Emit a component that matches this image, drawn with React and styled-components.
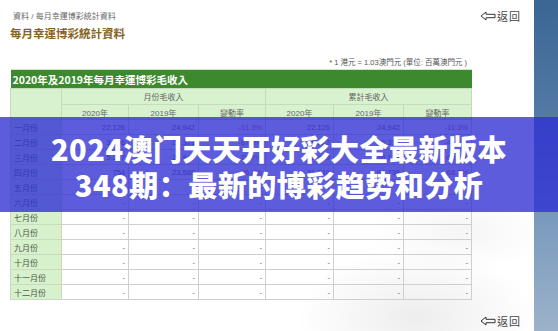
import React from 'react'
import styled, { createGlobalStyle } from 'styled-components'

const GlobalStyle = createGlobalStyle`
  html, body {
    margin: 0;
    padding: 0;
    background: #fff;
  }
  body {
    font-family: "Liberation Sans", "Noto Sans CJK TC", sans-serif;
  }
`

const Page = styled.div`
  position: relative;
  width: 558px;
  height: 331px;
  overflow: hidden;
  display: flex;
`

const Main = styled.div`
  flex: 1;
  display: flex;
  flex-direction: column;
  padding: 0 13px 3px 10px;
  background: radial-gradient(ellipse 120px 70px at 78% 96%, rgba(0, 0, 0, 0.07), transparent 100%),
    radial-gradient(ellipse 90px 40px at 86% 70%, rgba(0, 0, 0, 0.04), transparent 100%);
`

const SideStrip = styled.div`
  width: 24px;
  background: linear-gradient(180deg, #3a6594 0%, #547aa6 35%, #7e9dbf 70%, #9cb2ca 100%);
`

const TopBar = styled.div`
  display: flex;
  justify-content: space-between;
  align-items: center;
  height: 20px;
  margin-top: 5px;
`

const Crumb = styled.div`
  padding-left: 3px;
  font-size: 8px;
  color: #6a6a6a;
`

const BackLink = styled.a`
  display: flex;
  align-items: center;
  gap: 1px;
  font-size: 11px;
  color: #444;
  letter-spacing: 1px;
  text-decoration: none;
  align-self: ${({ bottom }) => (bottom ? 'flex-end' : 'auto')};
  margin-top: ${({ bottom }) => (bottom ? 'auto' : '2px')};
  height: 14px;
`

const Title = styled.h1`
  margin: 1px 0 0;
  height: 16px;
  line-height: 16px;
  font-size: 11.5px;
  font-weight: bold;
  color: #86651f;
`

const TableBlock = styled.div`
  width: 461px;
  margin-top: 15px;
`

const Note = styled.div`
  height: 12px;
  line-height: 12px;
  text-align: right;
  padding-right: 4px;
  font-size: 7.5px;
  color: #555;
`

const Table = styled.table`
  width: 461px;
  border-collapse: collapse;
  table-layout: fixed;
  border-top: 1px solid #c8ecbc;
`

const Caption = styled.th`
  height: 18px;
  padding: 0 0 0 2px;
  background: #3c8a2d;
  color: #fff;
  font-size: 10.5px;
  font-weight: bold;
  text-align: left;
  font-family: "Noto Sans CJK TC", sans-serif;
`

const HeadCell = styled.th`
  height: ${({ tall }) => (tall ? '15px' : '14px')};
  padding: 0;
  background: #d8f2cf;
  border: 1px solid #c3dcb9;
  color: #666;
  font-size: 8px;
  font-weight: normal;
  text-align: center;
`

const MonthCell = styled.td`
  height: 14px;
  padding: 0 0 0 3px;
  background: #d6f1cb;
  border: 1px solid #c7dcbf;
  color: #4e5a4c;
  font-size: 8px;
`

const Cell = styled.td`
  height: 14px;
  padding: 0 3px 0 0;
  border: 1px solid #cfcfcf;
  text-align: right;
  font-size: 7.5px;
  color: ${({ rate }) => (rate ? '#d9534f' : '#5b6470')};
`

const Banner = styled.div`
  position: absolute;
  top: 117px;
  left: 0;
  right: 0;
  height: 95px;
  padding-top: 3px;
  box-sizing: border-box;
  background: rgba(46, 46, 212, 0.78);
  display: flex;
  flex-direction: column;
  align-items: center;
  justify-content: center;
  color: #fff;
  font-family: "Noto Sans CJK SC", sans-serif;
  font-weight: 900;
  font-size: 29px;
  line-height: 36px;
  letter-spacing: 0.5px;
`

const BackArrow = () => (
  <svg width="16" height="10" viewBox="0 0 16 10">
    <path d="M1 5 L6 1 V3.3 H15 V6.7 H6 V9 Z" fill="none" stroke="#333" strokeWidth="1" strokeLinejoin="miter" />
  </svg>
)

const dash = ['-', '-', '-', '-', '-', '-']

const rows = [
  ['一月份', '22,126', '24,942', '-11.3%', '22,126', '24,942', '-11.3%'],
  ['二月份', '3,096', '25,371', '-87.8%', '25,222', '50,313', '-49.9%'],
  ['三月份', '5,257', '25,840', '-79.7%', '30,479', '76,153', '-60.0%'],
  ['四月份', '754', '23,588', '-96.8%', '31,210', '99,738', '-68.7%'],
  ['五月份', ...dash],
  ['六月份', ...dash],
  ['七月份', ...dash],
  ['八月份', ...dash],
  ['九月份', ...dash],
  ['十月份', ...dash],
  ['十一月份', ...dash],
  ['十二月份', ...dash],
]

const widths = [51, 67, 70, 67, 68, 70, 68]

const App = () => (
  <Page>
    <GlobalStyle />
    <Main>
      <TopBar>
        <Crumb>資料 / 每月幸運博彩統計資料</Crumb>
        <BackLink href="#"><BackArrow />返回</BackLink>
      </TopBar>
      <Title>每月幸運博彩統計資料</Title>
      <TableBlock>
        <Note>* 1 港元 = 1.03澳門元 (單位: 百萬澳門元 )</Note>
        <Table>
          <colgroup>
            {widths.map((w, i) => <col key={i} style={{ width: w }} />)}
          </colgroup>
          <thead>
            <tr>
              <Caption colSpan={7}>2020年及2019年每月幸運博彩毛收入</Caption>
            </tr>
            <tr>
              <HeadCell rowSpan={2} />
              <HeadCell tall colSpan={3}>月份毛收入</HeadCell>
              <HeadCell tall colSpan={3}>累計毛收入</HeadCell>
            </tr>
            <tr>
              <HeadCell>2020年</HeadCell>
              <HeadCell>2019年</HeadCell>
              <HeadCell>變動率</HeadCell>
              <HeadCell>2020年</HeadCell>
              <HeadCell>2019年</HeadCell>
              <HeadCell>變動率</HeadCell>
            </tr>
          </thead>
          <tbody>
            {rows.map(([month, ...vals]) => (
              <tr key={month}>
                <MonthCell>{month}</MonthCell>
                {vals.map((v, i) => (
                  <Cell key={i} rate={v.endsWith('%')}>{v}</Cell>
                ))}
              </tr>
            ))}
          </tbody>
        </Table>
      </TableBlock>
      <BackLink href="#" bottom><BackArrow />返回</BackLink>
    </Main>
    <SideStrip />
    <Banner>
      <div>2024澳门天天开好彩大全最新版本</div>
      <div>348期：最新的博彩趋势和分析</div>
    </Banner>
  </Page>
)

export default App
